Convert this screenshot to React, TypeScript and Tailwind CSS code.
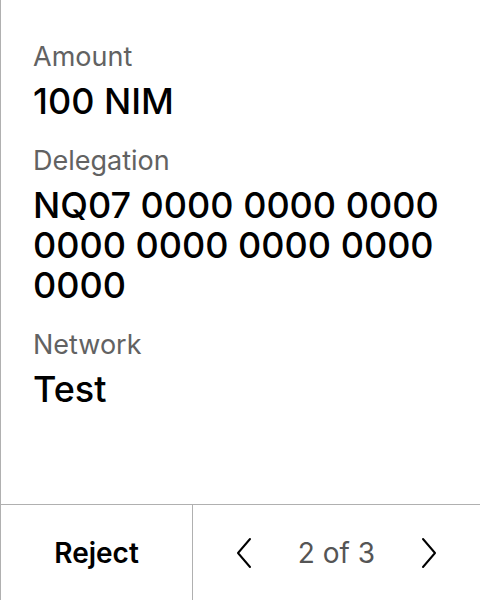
import React from 'react';

// Review screen rows
interface Field {
  label: string;
  value: string;
}

const fields: Field[] = [
  { label: 'Amount', value: '100 NIM' },
  { label: 'Delegation', value: 'NQ07 0000 0000 0000 0000 0000 0000 0000 0000' },
  { label: 'Network', value: 'Test' },
];

function Chevron({ dir }: { dir: 'left' | 'right' }) {
  return (
    <svg width="24" height="32" viewBox="0 0 24 32" fill="none" stroke="#000" strokeWidth="2" strokeLinecap="round" strokeLinejoin="round">
      {dir === 'left' ? <path d="M19 2 L7 16 L19 30" /> : <path d="M5 2 L17 16 L5 30" />}
    </svg>
  );
}

export default function App() {
  return (
    <div
      className="w-[480px] h-[600px] flex flex-col bg-white border-l border-[#b0b0b0]"
      style={{ fontFamily: 'Inter, "Noto Sans", sans-serif' }}
    >
      <div className="flex-1 flex flex-col pl-8 pr-2 pt-[41px] gap-[24px]">
        {fields.map((f) => (
          <div key={f.label} className="flex flex-col">
            <span className="text-[27px] leading-[32px] text-[#626262]">{f.label}</span>
            <span className="mt-[8px] text-[36px] leading-[40px] font-medium text-black">{f.value}</span>
          </div>
        ))}
      </div>
      <div className="h-[96px] flex border-t border-[#b0b0b0]">
        <div className="w-[192px] flex items-center justify-center border-r border-[#b0b0b0]">
          <span className="text-[28px] font-semibold text-black">Reject</span>
        </div>
        <div className="flex-1 flex items-center justify-between pl-[38px] pr-[38px]">
          <Chevron dir="left" />
          <span className="text-[28px] text-[#555555]">2 of 3</span>
          <Chevron dir="right" />
        </div>
      </div>
    </div>
  );
}
